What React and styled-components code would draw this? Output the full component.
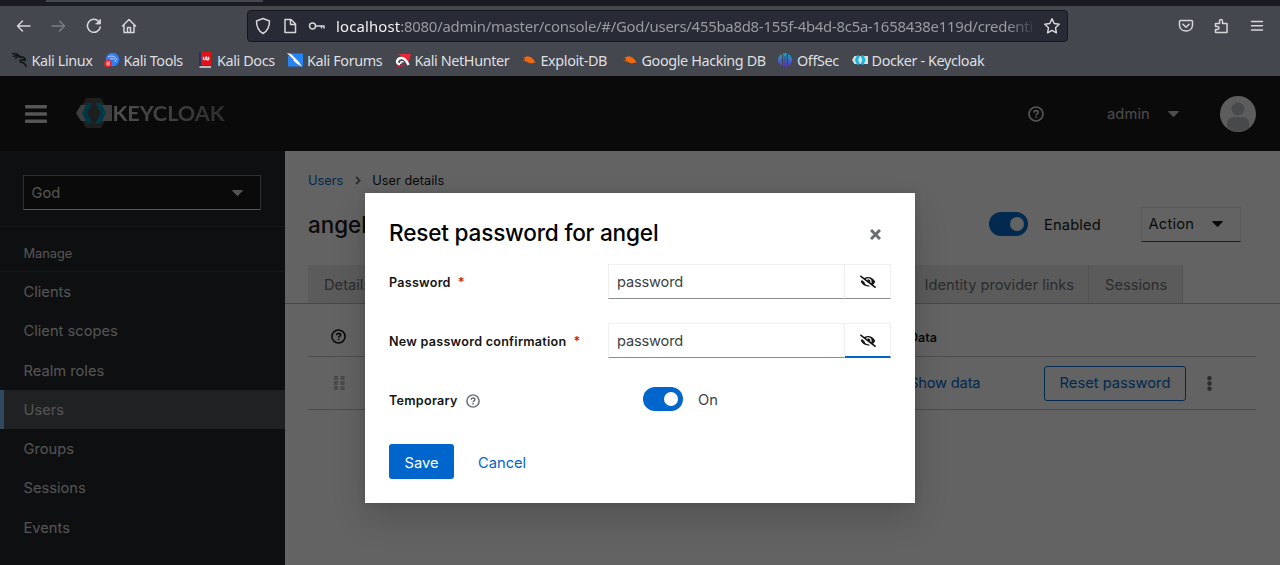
import React from 'react';
import styled, { createGlobalStyle, css } from 'styled-components';

const Global = createGlobalStyle`
  * { box-sizing: border-box; }
  body { margin: 0; overflow: hidden; }
  button { font: inherit; letter-spacing: inherit; }
`;

const ui = '"Inter", "Liberation Sans", sans-serif';

const Window = styled.div`
  width: 1280px;
  height: 565px;
  display: flex;
  flex-direction: column;
  overflow: hidden;
  font-family: ${ui};
`;

/* Browser chrome */
const TabStrip = styled.div`
  height: 6px;
  background: #1b1c23;
  padding-left: 46px;
`;
const ActiveTab = styled.div`
  width: 217px;
  height: 2px;
  background: #45484f;
`;
const Toolbar = styled.div`
  height: 40px;
  background: #44474e;
  display: flex;
  align-items: center;
  font-family: "Noto Sans", sans-serif;
`;
const NavButtons = styled.div`
  width: 247px;
  padding: 0 0 0 12px;
  display: flex;
  gap: 11px;
`;
const ChromeIcon = styled.svg`
  width: 24px;
  height: 24px;
  flex: none;
  fill: none;
  stroke: ${(p) => (p.$dim ? '#7b7d83' : '#d6d6d9')};
  stroke-width: 1.5;
  stroke-linecap: round;
  stroke-linejoin: round;
`;
const UrlBar = styled.div`
  width: 821px;
  height: 32px;
  margin-top: -1px;
  border: 1px solid #15161d;
  border-radius: 4px;
  background: #282a35;
  display: flex;
  align-items: center;
  padding: 0 3px;
  gap: 3.2px;
`;
const Url = styled.div`
  flex: 1;
  margin-left: 3.5px;
  overflow: hidden;
  white-space: nowrap;
  font-size: 14.9px;
  color: #9a9aa1;
  letter-spacing: -0.25px;
  mask-image: linear-gradient(to right, #000 calc(100% - 30px), transparent);
  span { color: #f0f0f3; letter-spacing: 0.15px; }
`;
const ChromeActions = styled.div`
  margin-left: auto;
  padding-right: 11.5px;
  display: flex;
  gap: 11.3px;
`;
const Bookmarks = styled.div`
  height: 30px;
  background: #44474e;
  display: flex;
  align-items: center;
  font-family: "Noto Sans", sans-serif;
  font-size: 14.4px;
  letter-spacing: -0.38px;
  color: #dfdfe1;
  padding: 0 0 2px 11.5px;
`;
const Bookmark = styled.div`
  width: ${(p) => p.$w}px;
  flex: none;
  display: flex;
  align-items: center;
  gap: 4px;
  white-space: nowrap;
  svg { width: 16px; height: 16px; flex: none; }
`;

/* Console */
const Console = styled.div`
  position: relative;
  height: 489px;
  display: flex;
  flex-direction: column;
`;
const Masthead = styled.div`
  height: 75px;
  flex: none;
  background: #151515;
  color: #fff;
  display: flex;
  align-items: center;
  padding: 0 24px;
`;
const MenuIcon = styled.svg`
  width: 22px;
  height: 20px;
  margin-left: 0.5px;
  fill: #dadada;
`;
const Logo = styled.div`
  margin-left: 29px;
  display: flex;
  align-items: center;
  font: 700 21.7px/1 Lato, sans-serif;
  letter-spacing: -0.05px;
  color: #9b9b9b;
  background: linear-gradient(90deg, #c5c5c5 30%, #747474);
  background-clip: text;
  -webkit-text-fill-color: transparent;
  svg { width: 36px; height: 32px; margin: -2px 1px 0 0; }
`;
const MastTools = styled.div`
  margin-left: auto;
  display: flex;
  align-items: center;
  color: #c4c4c4;
  font-size: 14.7px;
`;
const HelpIcon = styled.svg`
  width: ${(p) => p.$s}px;
  height: ${(p) => p.$s}px;
  flex: none;
`;
const UserName = styled.span`
  margin-left: 63px;
  width: 61px;
  padding-top: 1px;
  letter-spacing: 0.1px;
`;
const Caret = styled.svg`
  width: 11px;
  height: 6px;
  fill: currentColor;
`;
const Avatar = styled.svg`
  width: 36px;
  height: 36px;
  margin-left: 41px;
`;
const Body = styled.div`
  flex: 1;
  display: flex;
`;
const Sidebar = styled.nav`
  width: 285px;
  background: #212427;
  color: #d8d8d8;
`;
const RealmArea = styled.div`
  height: 76px;
  padding: 24px 24px 0 23px;
  border-bottom: 1px solid #34373b;
`;
const RealmSelect = styled.div`
  height: 35px;
  background: #151515;
  border: 1px solid #72767b;
  border-bottom-color: #d8d8d8;
  display: flex;
  align-items: center;
  justify-content: space-between;
  padding: 0 17px 0 7.5px;
  font-size: 14.7px;
`;
const NavTitle = styled.div`
  height: 45px;
  border-bottom: 1px solid #34373b;
  padding: 19px 24px 0 23.5px;
  font-size: 12.8px;
  line-height: 16px;
`;
const NavItem = styled.div`
  height: 39.25px;
  line-height: 40px;
  padding-left: 19.5px;
  border-left: 4px solid ${(p) => (p.$active ? '#73bcf7' : 'transparent')};
  background: ${(p) => (p.$active ? '#4f5255' : 'none')};
  font-size: 14.7px;
`;
const Main = styled.main`
  flex: 1;
  background: #fff;
  color: #151515;
  font-size: 14.7px;
`;
const Crumbs = styled.div`
  height: 42px;
  padding: 16px 24px 0 23px;
  display: flex;
  align-items: center;
  gap: 11.5px;
  font-size: 12.8px;
`;
const LinkText = styled.span`
  color: #06c;
`;
const TitleRow = styled.div`
  height: 62px;
  padding: 0 39px 0 23px;
  display: flex;
  align-items: center;
`;
const UserTitle = styled.h1`
  margin: 0;
  flex: 1;
  font-size: 22.4px;
  font-weight: 500;
`;
const Switch = styled.span`
  width: 39.5px;
  height: 24px;
  margin-top: ${(p) => p.$top || 0}px;
  border-radius: 12px;
  background: #06c;
  display: flex;
  align-items: center;
  justify-content: flex-end;
  padding-right: 4.5px;
  &::after {
    content: '';
    width: 14px;
    height: 14px;
    border-radius: 50%;
    background: #fff;
  }
`;
const SwitchLabel = styled.span`
  width: 113px;
  padding: 2px 0 0 16px;
  letter-spacing: 0.15px;
`;
const ActionMenu = styled.div`
  width: 100px;
  height: 35px;
  border: 1px solid #e6e6e6;
  border-bottom-color: #4a4c4e;
  display: flex;
  align-items: center;
  justify-content: space-between;
  padding: 0 17px 0 6.5px;
  letter-spacing: 0.2px;
`;
const Tabs = styled.div`
  height: 49px;
  padding: 10px 0 0 23px;
  border-bottom: 1px solid #b8b8b8;
  display: flex;
`;
const Tab = styled.div`
  width: ${(p) => p.$w}px;
  background: #eaeaea;
  border-right: 1px solid #d2d2d2;
  color: #6a6e73;
  padding-left: 16px;
  line-height: 40px;
  white-space: nowrap;
`;
const TableRow = styled.div`
  height: 53px;
  margin: 0 24px 0 23px;
  border-bottom: 1px solid #c2c2c2;
  display: grid;
  grid-template-columns: 601px 135px 142px 1fr;
  align-items: center;
`;
const FirstCell = styled.div`
  padding: ${(p) => (p.$grip ? '0 0 0 26px' : '13px 0 0 23px')};
  display: flex;
`;
const HeadCell = styled.div`
  padding-top: 15px;
  font-size: 12.6px;
  font-weight: 600;
`;
const ShowData = styled(LinkText)`
  letter-spacing: -0.2px;
`;
const OutlineButton = styled.button`
  height: 35px;
  padding: 0;
  background: none;
  border: 1px solid #06c;
  border-radius: 3px;
  color: #06c;
`;
const Kebab = styled.svg`
  width: 5px;
  height: 15px;
  margin-left: 21px;
  fill: #6a6e73;
`;

/* Dialog */
const Backdrop = styled.div`
  position: absolute;
  inset: 0;
  background: rgba(3, 3, 3, 0.62);
  display: flex;
  justify-content: center;
  align-items: flex-start;
  padding-top: 117px;
`;
const Dialog = styled.form`
  width: 550px;
  height: 310px;
  background: #fff;
  box-shadow: 0 16px 32px rgba(3, 3, 3, 0.16), 0 0 8px rgba(3, 3, 3, 0.1);
  padding: 24px 24px 0;
  color: #151515;
`;
const DialogHeader = styled.div`
  height: 47px;
  display: flex;
  justify-content: space-between;
  padding-right: 10px;
  h2 {
    margin: 0;
    font-size: 22.6px;
    line-height: 32px;
    font-weight: 500;
    letter-spacing: -0.2px;
    color: #000;
  }
  svg { width: 11px; height: 11px; margin-top: 12px; }
`;
const Field = styled.div`
  height: ${(p) => p.$h || 59}px;
  display: flex;
  align-items: flex-start;
`;
const Label = styled.label`
  width: ${(p) => p.$w || 219}px;
  padding-top: 11px;
  display: flex;
  align-items: center;
  font-size: 12.6px;
  line-height: 16px;
  font-weight: 600;
  letter-spacing: 0.25px;
  svg { margin-left: 8px; }
`;
const Required = styled.span`
  margin-left: 7px;
  color: #c9190b;
`;
const inputBorder = css`
  border: 1px solid #f0f0f0;
  border-bottom-color: #8a8d90;
`;
const TextInput = styled.div`
  ${inputBorder}
  width: 237px;
  height: 35px;
  line-height: 34px;
  padding-left: 8px;
  font-size: 14.6px;
  letter-spacing: -0.15px;
  color: #3c3f42;
`;
const RevealButton = styled.div`
  ${inputBorder}
  width: 46px;
  height: 35px;
  border-left: 0;
  ${(p) => p.$focus && 'border-bottom: 2px solid #06c;'}
  padding-top: 9.5px;
  text-align: center;
  line-height: 0;
  svg { width: 16px; height: 13.5px; }
`;
const OnText = styled.span`
  margin: 6px 0 0 15.5px;
  font-size: 14.7px;
  line-height: 24px;
  color: #3c3f42;
`;
const Actions = styled.div`
  display: flex;
  align-items: center;
  gap: 24px;
  font-size: 14.7px;
`;
const SaveButton = styled.button`
  width: 65px;
  height: 35px;
  padding: 2px 0 0;
  border: 0;
  border-radius: 3px;
  background: #06c;
  color: #fff;
`;
const CancelLink = styled(LinkText)`
  padding-top: 2px;
`;

const Help = ({ size, color }) => (
  <HelpIcon $s={size} viewBox="0 0 16 16" fill="none" stroke={color} strokeWidth="1.7">
    <circle cx="8" cy="8" r="7" />
    <path d="M5.9 6.6C6 5.3 6.9 4.7 8 4.7c1.200 0 2.200.7 2.200 1.800C10.200 7.900 8.100 7.900 8.100 9.400M8.100 10.400v1.700" />
  </HelpIcon>
);
const EyeSlash = () => (
  <svg viewBox="0 0 640 512" fill="#151515">
    <path d="M320 400c-75.850 0-137.250-58.710-142.900-133.110L72.200 185.820c-13.790 17.300-26.480 35.590-36.720 55.590a32.350 32.350 0 0 0 0 29.190C89.710 376.410 197.070 448 320 448c26.910 0 52.870-4 77.890-10.460L346 397.390a144.130 144.130 0 0 1-26 2.610zm313.820 58.100l-110.550-85.440a331.250 331.250 0 0 0 81.250-102.070 32.350 32.350 0 0 0 0-29.190C550.290 135.590 442.930 64 320 64a308.150 308.150 0 0 0-147.320 37.700L45.460 3.370A16 16 0 0 0 23 6.180L3.370 31.450A16 16 0 0 0 6.180 53.900l588.360 454.730a16 16 0 0 0 22.460-2.810l19.640-25.270a16 16 0 0 0-2.820-22.450zm-183.720-142l-39.300-30.380A94.750 94.750 0 0 0 416 256a94.760 94.760 0 0 0-121.310-92.210A47.650 47.650 0 0 1 304 192a46.640 46.640 0 0 1-1.540 10l-73.610-56.890A142.310 142.310 0 0 1 320 112a143.920 143.920 0 0 1 144 144c0 21.630-5.290 41.790-13.900 60.110z" />
  </svg>
);
const Down = () => <Caret viewBox="0 0 11 6"><path d="M.6 0h9.800q.8.1.2.9L6.200 5.500q-.7.6-1.400 0L.4.900Q-.2.1.6 0z" /></Caret>;

const OrangeBug = () => (
  <svg viewBox="0 0 16 16"><path d="M2.500 5l2 .3L6 4l3.500 1 2 1.500 1 1 1 1.500 1 1.500-2 .3-2.500.7-3-1-1.500-1-2.500-.5 1-1.500z" fill="#f2680f" /><path d="M1.500 8l3 1.500M6 3.500l1 1.500" stroke="#a9541f" strokeWidth=".7" /></svg>
);
const bookmarks = [
  { label: 'Kali Linux', w: 92, icon: (
    <svg viewBox="0 0 16 16" fill="none" stroke="#141517"><path d="M0 1.500l5 .5 3 2.500M1 4.500l4-1 4 2.500M3 6.500l3-1.500" strokeWidth="1.300" /><path d="M7 4.500c4 0 7 2 6 4-3-1-6-1-4.500 1.500 2 .5 5 1 5.500 5" strokeWidth="1.600" /></svg>) },
  { label: 'Kali Tools', w: 93.5, icon: (
    <svg viewBox="0 0 16 16"><circle cx="8.500" cy="7.500" r="6.800" fill="#347cf5" /><path d="M4 5c4-2 7-1 9 3M6 7c3-1 5 0 6 3" stroke="#c6dbff" fill="none" /><circle cx="4" cy="11.500" r="3.700" fill="#e2262b" /><path d="M3.200 9.500v4M5 9.500v4" stroke="#fff" strokeWidth=".9" /></svg>) },
  { label: 'Kali Docs', w: 90, icon: (
    <svg viewBox="0 0 16 16"><path d="M2 .5h2.500V14H2z" fill="#22326b" /><path d="M4 0h10v13H4z" fill="#df1218" /><path d="M2.500 14H14v2H2.500z" fill="#b9babd" /><path d="M7 5c-1.500 1.500-.5 3 .8 2.500S8.500 4.500 9.500 5s-.5 3 1 3S12.500 6 11 5" stroke="#fff" strokeWidth="1.200" fill="none" /></svg>) },
  { label: 'Kali Forums', w: 107.5, icon: (
    <svg viewBox="0 0 16 16"><path d="M1 1.500h15v13H1z" fill="#2585f4" /><path d="M0 1l4 1 8 8 3 5-6-4-6-6z" fill="#fff" /><path d="M.5 2l6 6" stroke="#25282d" strokeWidth=".8" /></svg>) },
  { label: 'Kali NetHunter', w: 126, icon: (
    <svg viewBox="0 0 16 16"><path d="M3 2h13l-2.500 8L8 5z" fill="#ef2636" /><path d="M5 12.500C-1 11 3 5.500 7 6c3.500.5 5 3.500 6.500 7" stroke="#fff" strokeWidth="2.400" fill="none" /><path d="M6 12c-1-2 0-3 2.500-2" stroke="#fff" strokeWidth="1.400" fill="none" /><path d="M1 13c3 2.500 6 1.500 7.500-.5l2.500 1.500" stroke="#c51c3c" strokeWidth="1.300" fill="none" /></svg>) },
  { label: 'Exploit-DB', w: 101, icon: <OrangeBug /> },
  { label: 'Google Hacking DB', w: 155.5, icon: <OrangeBug /> },
  { label: 'OffSec', w: 74.5, icon: (
    <svg viewBox="0 0 16 16"><defs><linearGradient id="os" x2="0" y2="1"><stop stopColor="#12a6c7" /><stop offset="1" stopColor="#6530c8" /></linearGradient></defs><g fill="url(#os)"><path d="M5 2v12C-.5 11-.5 5 5 2z" /><path d="M6.300 1h3.400v14H6.300z" /><path d="M11 2c5.500 3 5.500 9 0 12z" /></g><path d="M8 4v11" stroke="#3c4058" strokeWidth=".8" /></svg>) },
  { label: 'Docker - Keycloak', w: 150, icon: (
    <svg viewBox="0 0 16 16"><path d="M2.500 4H16v8H2.500L0 8z" fill="#dcdddf" /><path d="M6.500 3.500L4.500 8l2 4.500M10 3.500L12 8l-2 4.500" stroke="#14b7e4" strokeWidth="3" fill="none" /></svg>) },
];

const navItems = ['Clients', 'Client scopes', 'Realm roles', 'Users', 'Groups', 'Sessions', 'Events'];

export default function App() {
  return (
    <Window>
      <Global />
      <TabStrip><ActiveTab /></TabStrip>
      <Toolbar>
        <NavButtons>
          <ChromeIcon viewBox="0 0 24 24"><path d="M18 12H5.500M10.500 7l-5 5 5 5" /></ChromeIcon>
          <ChromeIcon $dim viewBox="0 0 24 24"><path d="M5 12h12.500M12.500 7l5 5-5 5" /></ChromeIcon>
          <ChromeIcon viewBox="0 0 24 24"><path d="M16.500 7.200A6.500 6.500 0 1 0 18.300 13" /><path d="M18.500 5.500v4.500H14z" fill="#d6d6d9" strokeWidth=".8" /></ChromeIcon>
          <ChromeIcon viewBox="0 0 24 24"><path d="M5.500 12L12 5.500l6.500 6.500M7 11v7.500h10V11M10.500 18v-4.500h3V18" /></ChromeIcon>
        </NavButtons>
        <UrlBar>
          <ChromeIcon viewBox="0 0 24 24"><path d="M12 4.500l6.500 2.500c0 6-2 10-6.500 12.500C7.500 17 5.500 13 5.500 7z" /></ChromeIcon>
          <ChromeIcon viewBox="0 0 24 24"><path d="M7 5.500h6l4.500 4.500v8.500H7zM12.500 6v4.500H17" /></ChromeIcon>
          <ChromeIcon viewBox="0 0 24 24"><circle cx="7.500" cy="12" r="3" /><path d="M10.500 12h8.500v2M16.500 12v1.800" /></ChromeIcon>
          <Url><span>localhost</span>:8080/admin/master/console/#/God/users/455ba8d8-155f-4b4d-8c5a-1658438e119d/credenti</Url>
          <ChromeIcon viewBox="0 0 24 24"><path d="M12 4.800l2.200 4.700 5 .7-3.700 3.500.9 5.100-4.400-2.500-4.400 2.500.9-5.100-3.700-3.500 5-.7z" /></ChromeIcon>
        </UrlBar>
        <ChromeActions>
          <ChromeIcon viewBox="0 0 24 24"><path d="M6.500 6.500h11q1 0 1 1V11c0 8-13 8-13 0V7.500q0-1 1-1zM9 10.300l3 3 3-3" /></ChromeIcon>
          <ChromeIcon viewBox="0 0 24 24"><path d="M6.500 18.500v-3h2q1.500-.2 1.500-1.500t-1.500-1.500h-2v-3h4V7q.2-1.500 1.500-1.500T13.500 7v2.500H18v9z" /></ChromeIcon>
          <ChromeIcon viewBox="0 0 24 24"><path d="M6.500 7.500h11M6.500 11.800h11M6.500 16h11" /></ChromeIcon>
        </ChromeActions>
      </Toolbar>
      <Bookmarks>
        {bookmarks.map((b) => <Bookmark key={b.label} $w={b.w}>{b.icon}{b.label}</Bookmark>)}
      </Bookmarks>
      <Console>
        <Masthead>
          <MenuIcon viewBox="0 0 22 20"><rect y="1" width="22" height="3.400" rx="1" /><rect y="8.300" width="22" height="3.400" rx="1" /><rect y="15.600" width="22" height="3.400" rx="1" /></MenuIcon>
          <Logo>
            <svg viewBox="0 0 36 32">
              <path d="M10 1h15l8 15-8 15H10L2 16z" fill="#4d4d4d" />
              <path d="M5 8h31v16H5L0 16z" fill="#9d9d9d" />
              <path d="M15 7l-5 9 5 9h7l5-9-5-9z" fill="#4a4a4a" />
              <path d="M11 6h5.500l-5.200 10 5.200 10H11L6 16z" fill="#008aaa" />
              <path d="M19.500 6H25l5 10-5 10h-5.500l5-10z" fill="#0092b4" />
            </svg>
            KEYCLOAK
          </Logo>
          <MastTools>
            <Help size={16} color="#d8d8d8" />
            <UserName>admin</UserName>
            <Down />
            <Avatar viewBox="0 0 36 36">
              <circle cx="18" cy="18" r="18" fill="#f0f0f0" />
              <circle cx="18" cy="13" r="6.500" fill="#b8bbbe" />
              <path d="M7 32V28q0-7 7-7h8q7 0 7 7v4q-11 7-22 0z" fill="#b8bbbe" />
            </Avatar>
          </MastTools>
        </Masthead>
        <Body>
          <Sidebar>
            <RealmArea><RealmSelect>God<Down /></RealmSelect></RealmArea>
            <NavTitle>Manage</NavTitle>
            {navItems.map((n) => <NavItem key={n} $active={n === 'Users'}>{n}</NavItem>)}
          </Sidebar>
          <Main>
            <Crumbs>
              <LinkText>Users</LinkText>
              <svg width="6" height="9" viewBox="0 0 6 9" fill="none" stroke="#6a6e73" strokeWidth="1.800"><path d="M1 .8l3.700 3.700L1 8.200" /></svg>
              <span>User details</span>
            </Crumbs>
            <TitleRow>
              <UserTitle>angel</UserTitle>
              <Switch />
              <SwitchLabel>Enabled</SwitchLabel>
              <ActionMenu>Action<Down /></ActionMenu>
            </TitleRow>
            <Tabs>
              <Tab $w={80}>Details</Tab>
              <Tab $w={520.5} />
              <Tab $w={180.5}>Identity provider links</Tab>
              <Tab $w={94}>Sessions</Tab>
            </Tabs>
            <TableRow>
              <FirstCell><Help size={15} color="#151515" /></FirstCell>
              <HeadCell>Data</HeadCell>
            </TableRow>
            <TableRow>
              <FirstCell $grip>
                <svg width="11" height="14" viewBox="0 0 11 14" fill="#bcbec0"><path d="M0 0h4v4H0zM6.500 0h4v4h-4zM0 5h4v4H0zM6.500 5h4v4h-4zM0 10h4v4H0zM6.500 10h4v4h-4z" /></svg>
              </FirstCell>
              <ShowData>Show data</ShowData>
              <OutlineButton type="button">Reset password</OutlineButton>
              <Kebab viewBox="0 0 5 15"><circle cx="2.500" cy="2.300" r="2.200" /><circle cx="2.500" cy="7.500" r="2.200" /><circle cx="2.500" cy="12.700" r="2.200" /></Kebab>
            </TableRow>
          </Main>
        </Body>
        <Backdrop>
          <Dialog>
            <DialogHeader>
              <h2>Reset password for angel</h2>
              <svg viewBox="0 0 11 11" stroke="#6a6e73" strokeWidth="3"><path d="M1 1l9 9M10 1l-9 9" /></svg>
            </DialogHeader>
            <Field>
              <Label>Password<Required>*</Required></Label>
              <TextInput>password</TextInput>
              <RevealButton><EyeSlash /></RevealButton>
            </Field>
            <Field>
              <Label>New password confirmation<Required>*</Required></Label>
              <TextInput>password</TextInput>
              <RevealButton $focus><EyeSlash /></RevealButton>
            </Field>
            <Field $h={62}>
              <Label $w={254}>Temporary<Help size={14} color="#6a6e73" /></Label>
              <Switch $top={5} />
              <OnText>On</OnText>
            </Field>
            <Actions>
              <SaveButton type="button">Save</SaveButton>
              <CancelLink>Cancel</CancelLink>
            </Actions>
          </Dialog>
        </Backdrop>
      </Console>
    </Window>
  );
}
